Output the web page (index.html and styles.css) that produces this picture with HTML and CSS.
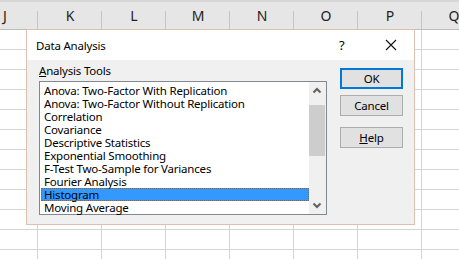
FILE: index.html
```html
<html>
    <head>
        <link rel="stylesheet" href="styles.css">
    </head>
    <body>
        <div class="sheet">
            <div class="row head">
                <div class="cell first">J</div>
                <div class="cell">K</div>
                <div class="cell">L</div>
                <div class="cell">M</div>
                <div class="cell">N</div>
                <div class="cell">O</div>
                <div class="cell">P</div>
                <div class="cell">Q</div>
            </div>
            <div class="row"><div class="cell first"></div><div class="cell"></div><div class="cell"></div><div class="cell"></div><div class="cell"></div><div class="cell"></div><div class="cell"></div><div class="cell"></div></div>
            <div class="row"><div class="cell first"></div><div class="cell"></div><div class="cell"></div><div class="cell"></div><div class="cell"></div><div class="cell"></div><div class="cell"></div><div class="cell"></div></div>
            <div class="row"><div class="cell first"></div><div class="cell"></div><div class="cell"></div><div class="cell"></div><div class="cell"></div><div class="cell"></div><div class="cell"></div><div class="cell"></div></div>
            <div class="row"><div class="cell first"></div><div class="cell"></div><div class="cell"></div><div class="cell"></div><div class="cell"></div><div class="cell"></div><div class="cell"></div><div class="cell"></div></div>
            <div class="row"><div class="cell first"></div><div class="cell"></div><div class="cell"></div><div class="cell"></div><div class="cell"></div><div class="cell"></div><div class="cell"></div><div class="cell"></div></div>
            <div class="row"><div class="cell first"></div><div class="cell"></div><div class="cell"></div><div class="cell"></div><div class="cell"></div><div class="cell"></div><div class="cell"></div><div class="cell"></div></div>
            <div class="row"><div class="cell first"></div><div class="cell"></div><div class="cell"></div><div class="cell"></div><div class="cell"></div><div class="cell"></div><div class="cell"></div><div class="cell"></div></div>
            <div class="row"><div class="cell first"></div><div class="cell"></div><div class="cell"></div><div class="cell"></div><div class="cell"></div><div class="cell"></div><div class="cell"></div><div class="cell"></div></div>
            <div class="row"><div class="cell first"></div><div class="cell"></div><div class="cell"></div><div class="cell"></div><div class="cell"></div><div class="cell"></div><div class="cell"></div><div class="cell"></div></div>
            <div class="row"><div class="cell first"></div><div class="cell"></div><div class="cell"></div><div class="cell"></div><div class="cell"></div><div class="cell"></div><div class="cell"></div><div class="cell"></div></div>
            <div class="row"><div class="cell first"></div><div class="cell"></div><div class="cell"></div><div class="cell"></div><div class="cell"></div><div class="cell"></div><div class="cell"></div><div class="cell"></div></div>
            <div class="row"><div class="cell first"></div><div class="cell"></div><div class="cell"></div><div class="cell"></div><div class="cell"></div><div class="cell"></div><div class="cell"></div><div class="cell"></div></div>
        </div>

        <div class="dialog">
            <div class="titlebar">
                <span class="title">Data Analysis</span>
                <span class="help-q">?</span>
                <svg class="close" width="12" height="12" viewBox="0 0 12 12">
                    <path d="M1 1 L11 11 M11 1 L1 11" stroke="#111" stroke-width="1.1" fill="none"/>
                </svg>
            </div>
            <div class="body">
                <div class="left">
                    <div class="label"><u>A</u>nalysis Tools</div>
                    <div class="listbox">
                        <div class="items">
                            <div class="item">Anova: Two-Factor With Replication</div>
                            <div class="item">Anova: Two-Factor Without Replication</div>
                            <div class="item">Correlation</div>
                            <div class="item">Covariance</div>
                            <div class="item">Descriptive Statistics</div>
                            <div class="item">Exponential Smoothing</div>
                            <div class="item">F-Test Two-Sample for Variances</div>
                            <div class="item">Fourier Analysis</div>
                            <div class="item selected">Histogram</div>
                            <div class="item">Moving Average</div>
                        </div>
                        <div class="scrollbar">
                            <svg class="arrow" width="16" height="17" viewBox="0 0 16 17">
                                <path d="M4.5 10.5 L8 7 L11.5 10.5" stroke="#606060" stroke-width="2" fill="none"/>
                            </svg>
                            <div class="track"><div class="thumb"></div></div>
                            <svg class="arrow" width="16" height="17" viewBox="0 0 16 17">
                                <path d="M4.5 6.5 L8 10 L11.5 6.5" stroke="#606060" stroke-width="2" fill="none"/>
                            </svg>
                        </div>
                    </div>
                </div>
                <div class="buttons">
                    <div class="btn default">OK</div>
                    <div class="btn">Cancel</div>
                    <div class="btn spaced"><u>H</u>elp</div>
                </div>
            </div>
        </div>
    </body>
</html>
```

FILE: styles.css
```css
body
{
    margin: 0;
    background: #ffffff;
    font-family: "Noto Sans", "Open Sans", sans-serif;
    overflow: hidden;
}

.sheet
{
    width: 459px;
    height: 259px;
    overflow: hidden;
}

.row
{
    display: flex;
    height: 20px;
}

.cell
{
    flex: 0 0 64px;
    box-sizing: border-box;
    height: 20px;
    border-right: 1px solid #d4d4d4;
    border-bottom: 1px solid #d4d4d4;
}

.cell.first
{
    flex: 0 0 38px;
}

.head
{
    height: 30px;
    background: #e6e6e6;
    border-top: 2px solid #d6d6d6;
    box-sizing: border-box;
}

.head .cell
{
    height: 28px;
    border-right: none;
    border-bottom: 1px solid #bdbdbd;
    background: linear-gradient(#c4c4c4, #c4c4c4) right bottom / 1px 18px no-repeat;
    font-size: 14px;
    color: #222;
    text-align: center;
    line-height: 28px;
}

.head .cell.first
{
    text-align: left;
    padding-left: 3px;
}

.dialog
{
    position: absolute;
    left: 26px;
    top: 29px;
    width: 389px;
    height: 196px;
    box-sizing: border-box;
    border: 1px solid #dcbfae;
    background: #f0f0f0;
    font-size: 11.5px;
    letter-spacing: -0.2px;
    color: #000;
}

.titlebar
{
    display: flex;
    align-items: center;
    height: 30px;
    background: #ffffff;
    padding-left: 9px;
}

.title
{
    flex: 1;
}

.help-q
{
    width: 14px;
    font-size: 13px;
    margin-right: 32px;
}

.close
{
    margin-right: 17px;
}

.body
{
    display: flex;
    padding-left: 12px;
}

.left
{
    display: flex;
    flex-direction: column;
}

.label
{
    height: 16px;
    margin-top: 3px;
    margin-bottom: 2px;
    line-height: 16px;
}

.listbox
{
    display: flex;
    width: 288px;
    height: 134px;
    box-sizing: border-box;
    border: 1px solid #828790;
    background: #ffffff;
}

.items
{
    flex: 1;
    padding: 2px 0 0 1px;
}

.item
{
    height: 13px;
    line-height: 13px;
    padding-left: 3px;
    white-space: nowrap;
}

.item.selected
{
    background: #3399ff;
    outline: 1px dotted #6a6a6a;
    outline-offset: -1px;
}

.scrollbar
{
    display: flex;
    flex-direction: column;
    width: 17px;
    background: #f0f0f0;
}

.arrow
{
    display: block;
}

.track
{
    flex: 1;
    padding-top: 6px;
}

.thumb
{
    width: 16px;
    height: 51px;
    background: #cdcdcd;
}

.buttons
{
    display: flex;
    flex-direction: column;
    gap: 6px;
    margin-left: 13px;
    margin-top: 8px;
}

.btn
{
    width: 63px;
    height: 21px;
    box-sizing: border-box;
    border: 1px solid #adadad;
    background: #e1e1e1;
    text-align: center;
    line-height: 19px;
}

.btn.default
{
    border: 2px solid #0078d7;
    line-height: 17px;
}

.btn.spaced
{
    margin-top: 5px;
}
```
